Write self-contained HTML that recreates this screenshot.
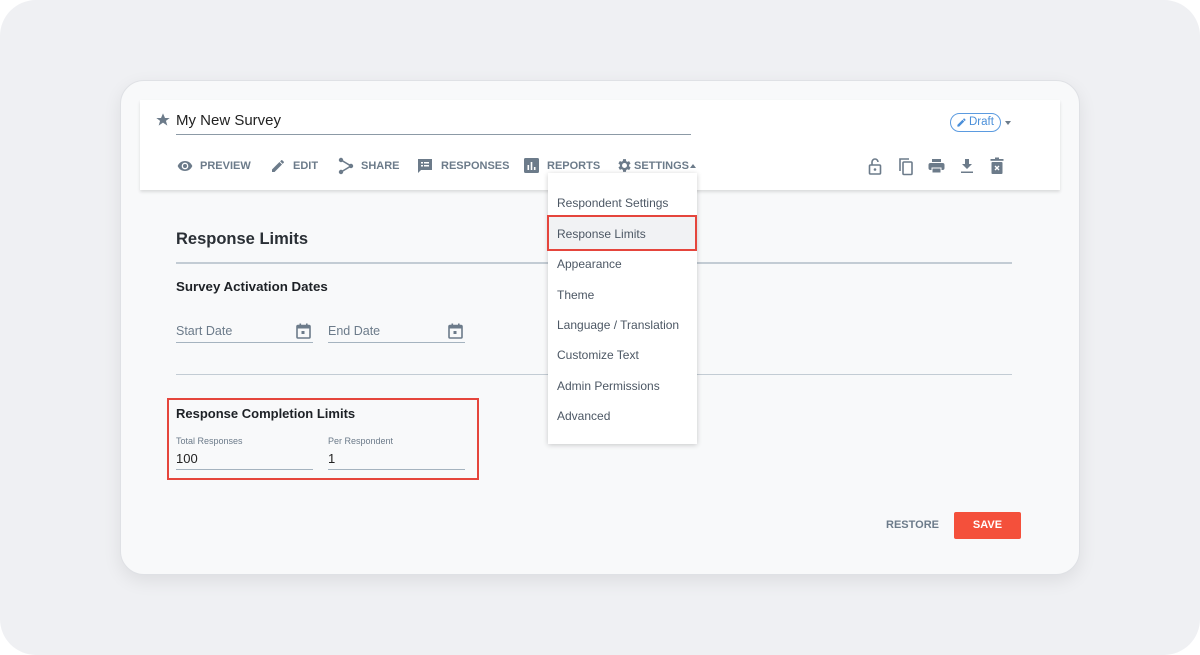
<!DOCTYPE html>
<html><head><style>
*{margin:0;padding:0;box-sizing:border-box}
body{width:1200px;height:655px;background:#fff;font-family:"Liberation Sans",sans-serif;position:relative;overflow:hidden}
.bg{position:absolute;left:0;top:0;width:1200px;height:655px;background:#eff0f3;border-radius:36px}
.card{position:absolute;left:120px;top:80px;width:960px;height:495px;background:#f8f9fa;border-radius:24px;border:1px solid #dfe1e5;box-shadow:0 6px 18px rgba(0,0,0,.08);overflow:hidden}
.hdr{position:absolute;left:20px;top:20px;width:920px;height:90px;background:#fff;box-shadow:0 2px 3px rgba(0,0,0,.12)}
.a{position:absolute}
.nav{position:absolute;top:160px;font-size:11px;font-weight:bold;color:#6c7b8a;letter-spacing:0}
.menu{position:absolute;left:548px;top:173px;width:149px;height:271px;background:#fff;box-shadow:0 1px 5px rgba(0,0,0,.2)}
.mi{position:absolute;left:9px;font-size:12px;color:#4c5764}
.lbl{font-size:12.5px;color:#6c7b8a}
.line{position:absolute;height:1px;background:#a5b3bf}
</style></head><body>
<div class="bg"></div>
<div class="card"></div>
<div class="hdr" style="left:140px;top:100px"></div>
<svg class="a" style="left:155px;top:112px" width="16" height="16" viewBox="0 0 24 24"><path fill="#6c7b8a" d="M12 2l3 7h7l-5.6 4.3 2.1 7.2L12 16l-6.5 4.5 2.1-7.2L2 9h7z"/></svg>
<div class="a" style="left:176px;top:112px;font-size:15px;color:#222">My New Survey</div>
<div class="line" style="left:176px;top:134px;width:515px;background:#8c9aa6"></div>
<div class="a" style="left:950px;top:113px;width:51px;height:19px;border:1px solid #5b9be0;border-radius:10px;color:#4a8fd9;font-size:11.5px;padding:2px 0 0 18px">Draft</div>
<svg class="a" style="left:956px;top:117px" width="11" height="11" viewBox="0 0 24 24"><path fill="#4a8fd9" d="M3 17.2V21h3.8L18 9.8 14.2 6zM20.7 7c.4-.4.4-1 0-1.4l-2.3-2.3c-.4-.4-1-.4-1.4 0l-1.8 1.8 3.8 3.8z"/></svg>
<div class="a" style="left:1005px;top:121px;border:3.5px solid transparent;border-top:4px solid #6c7b8a"></div>
<!-- nav -->
<svg class="a" style="left:176px;top:158px" width="18" height="16" viewBox="0 0 24 24"><path fill="#6c7b8a" d="M12 4.5C7 4.5 2.7 7.6 1 12c1.7 4.4 6 7.5 11 7.5s9.3-3.1 11-7.5c-1.7-4.4-6-7.5-11-7.5zM12 17a5 5 0 110-10 5 5 0 010 10zm0-8a3 3 0 100 6 3 3 0 000-6z"/></svg>
<div class="nav" style="left:200px">PREVIEW</div>
<svg class="a" style="left:270px;top:158px" width="16" height="16" viewBox="0 0 24 24"><path fill="#6c7b8a" d="M3 17.2V21h3.8L18 9.8 14.2 6zM20.7 7c.4-.4.4-1 0-1.4l-2.3-2.3c-.4-.4-1-.4-1.4 0l-1.8 1.8 3.8 3.8z"/></svg>
<div class="nav" style="left:293px">EDIT</div>
<svg class="a" style="left:338px;top:157px" width="16" height="18" viewBox="0 0 16 18"><circle cx="3" cy="3" r="2.2" fill="#6c7b8a"/><circle cx="3" cy="15" r="2.2" fill="#6c7b8a"/><circle cx="13" cy="9" r="2.2" fill="#6c7b8a"/><path d="M3 3l10 6-10 6" stroke="#6c7b8a" stroke-width="1.6" fill="none"/></svg>
<div class="nav" style="left:361px">SHARE</div>
<svg class="a" style="left:417px;top:158px" width="16" height="16" viewBox="0 0 16 16"><path fill="#6c7b8a" d="M1 1h14v11H4l-3 3z"/><path fill="#fff" d="M4 4h2v1.5H4zM7 4h5v1.5H7zM4 7h2v1.5H4zM7 7h5v1.5H7z"/></svg>
<div class="nav" style="left:441px">RESPONSES</div>
<svg class="a" style="left:524px;top:158px" width="15" height="15" viewBox="0 0 15 15"><rect width="15" height="15" rx="1.5" fill="#6c7b8a"/><path fill="#fff" d="M3.5 7h1.6v5H3.5zM6.7 4h1.6v8H6.7zM9.9 9h1.6v3H9.9z"/></svg>
<div class="nav" style="left:547px">REPORTS</div>
<svg class="a" style="left:616px;top:157px" width="17" height="17" viewBox="0 0 24 24"><path fill="#6c7b8a" d="M19.4 13a7.5 7.5 0 000-2l2.1-1.6-2-3.5-2.5 1a7.5 7.5 0 00-1.7-1L15 3h-4l-.4 2.7a7.5 7.5 0 00-1.7 1l-2.5-1-2 3.5L6.6 11a7.5 7.5 0 000 2l-2.1 1.6 2 3.5 2.5-1c.5.4 1.1.7 1.7 1L11 21h4l.4-2.7c.6-.3 1.2-.6 1.7-1l2.5 1 2-3.5zM13 15.5a3.5 3.5 0 110-7 3.5 3.5 0 010 7z" transform="translate(-1 0)"/></svg>
<div class="nav" style="left:634px">SETTINGS</div>
<div class="a" style="left:690px;top:164px;border:3px solid transparent;border-bottom:4px solid #6c7b8a;border-top:0"></div>
<!-- right icons -->
<svg class="a" style="left:868px;top:157px" width="14" height="18" viewBox="0 0 14 18"><path d="M4 8V5a3 3 0 016 0" stroke="#6c7b8a" stroke-width="1.6" fill="none"/><rect x="1.5" y="8" width="11" height="9" rx="1" stroke="#6c7b8a" stroke-width="1.6" fill="none"/><circle cx="7" cy="12.5" r="1.3" fill="#6c7b8a"/></svg>
<svg class="a" style="left:898px;top:157px" width="16" height="19" viewBox="0 0 16 19"><path d="M2 14V2h9" stroke="#6c7b8a" stroke-width="1.6" fill="none"/><rect x="5" y="5" width="9" height="12.5" rx="1" stroke="#6c7b8a" stroke-width="1.6" fill="none"/></svg>
<svg class="a" style="left:928px;top:158px" width="17" height="16" viewBox="0 0 17 16"><rect x="4" y="1" width="9" height="3" fill="#6c7b8a"/><rect x="0.5" y="5" width="16" height="7" rx="2" fill="#6c7b8a"/><rect x="4" y="10" width="9" height="5" fill="#6c7b8a" stroke="#fff" stroke-width="1"/></svg>
<svg class="a" style="left:960px;top:158px" width="14" height="16" viewBox="0 0 14 16"><path fill="#6c7b8a" d="M5 1h4v5h3l-5 5-5-5h3zM1 13.5h12V15H1z"/></svg>
<svg class="a" style="left:990px;top:157px" width="14" height="18" viewBox="0 0 14 18"><rect x="0.5" y="2" width="13" height="1.8" fill="#6c7b8a"/><rect x="5" y="0.5" width="4" height="2" fill="#6c7b8a"/><rect x="1.5" y="5" width="11" height="12" rx="1" fill="#6c7b8a"/><path d="M5 9l4 4M9 9l-4 4" stroke="#fff" stroke-width="1.4"/></svg>
<!-- content -->
<div class="a" style="left:176px;top:230px;font-size:16.5px;font-weight:bold;color:#2a2f35">Response Limits</div>
<div class="line" style="left:176px;top:262px;width:836px;background:#c3ccd4;height:2px"></div>
<div class="a" style="left:176px;top:279px;font-size:13.3px;font-weight:bold;color:#1d2126">Survey Activation Dates</div>
<div class="a lbl" style="left:176px;top:324px">Start Date</div>
<div class="a lbl" style="left:328px;top:324px">End Date</div>
<svg class="a" style="left:296px;top:323px" width="15" height="16" viewBox="0 0 15 16"><rect x="1" y="2.5" width="13" height="12.5" rx="1" stroke="#6c7b8a" stroke-width="1.6" fill="none"/><rect x="1" y="2.5" width="13" height="3" fill="#6c7b8a"/><rect x="3.5" y="0.5" width="1.6" height="3" fill="#6c7b8a"/><rect x="10" y="0.5" width="1.6" height="3" fill="#6c7b8a"/><rect x="5.5" y="8" width="3" height="3" fill="#6c7b8a"/></svg>
<svg class="a" style="left:448px;top:323px" width="15" height="16" viewBox="0 0 15 16"><rect x="1" y="2.5" width="13" height="12.5" rx="1" stroke="#6c7b8a" stroke-width="1.6" fill="none"/><rect x="1" y="2.5" width="13" height="3" fill="#6c7b8a"/><rect x="3.5" y="0.5" width="1.6" height="3" fill="#6c7b8a"/><rect x="10" y="0.5" width="1.6" height="3" fill="#6c7b8a"/><rect x="5.5" y="8" width="3" height="3" fill="#6c7b8a"/></svg>
<div class="line" style="left:176px;top:342px;width:137px"></div>
<div class="line" style="left:328px;top:342px;width:137px"></div>
<div class="line" style="left:176px;top:374px;width:836px;background:#c3ccd4"></div>
<div class="a" style="left:167px;top:398px;width:312px;height:82px;border:2px solid #e5453c"></div>
<div class="a" style="left:176px;top:406px;font-size:13px;font-weight:bold;color:#1d2126">Response Completion Limits</div>
<div class="a" style="left:176px;top:436px;font-size:9px;color:#6c7b8a">Total Responses</div>
<div class="a" style="left:328px;top:436px;font-size:9px;color:#6c7b8a">Per Respondent</div>
<div class="a" style="left:176px;top:451px;font-size:13px;color:#222">100</div>
<div class="a" style="left:328px;top:451px;font-size:13px;color:#222">1</div>
<div class="line" style="left:176px;top:469px;width:137px"></div>
<div class="line" style="left:328px;top:469px;width:137px"></div>
<div class="a" style="left:886px;top:519px;font-size:11px;font-weight:bold;color:#6c7b8a">RESTORE</div>
<div class="a" style="left:954px;top:512px;width:67px;height:27px;background:#f4503b;border-radius:2px;color:#fff;font-size:11px;font-weight:bold;text-align:center;line-height:27px">SAVE</div>
<!-- menu -->
<div class="menu"></div>
<div class="a" style="left:547px;top:215px;width:150px;height:36px;background:#f1f2f4;border:2px solid #e5453c"></div>
<div class="mi" style="top:196px;left:557px">Respondent Settings</div>
<div class="mi" style="top:227px;left:557px">Response Limits</div>
<div class="mi" style="top:257px;left:557px">Appearance</div>
<div class="mi" style="top:288px;left:557px">Theme</div>
<div class="mi" style="top:318px;left:557px">Language / Translation</div>
<div class="mi" style="top:348px;left:557px">Customize Text</div>
<div class="mi" style="top:379px;left:557px">Admin Permissions</div>
<div class="mi" style="top:409px;left:557px">Advanced</div>
</body></html>
